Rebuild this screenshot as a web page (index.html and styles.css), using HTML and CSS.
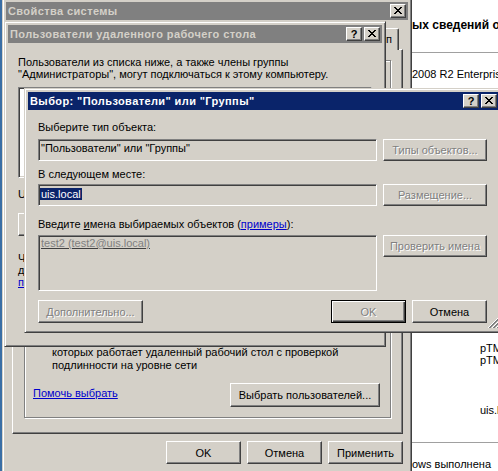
FILE: index.html
```html
<!DOCTYPE html>
<html lang="ru">
<head>
<meta charset="utf-8">
<title>Выбор пользователей</title>
<link rel="stylesheet" href="styles.css">
</head>
<body>
<div class="desktop">

  <div class="infowin">
    <div class="info-head">ых сведений о вашем компьютере</div>
    <div class="info-rule"></div>
    <div class="info-line">2008 R2 Enterprise</div>
    <div class="info-values">
      <div>pTM</div>
      <div>pTM</div>
      <div class="info-uis">uis.local</div>
    </div>
    <div class="info-rule info-rule2"></div>
    <div class="info-line info-act">ows выполнена</div>
  </div>

  <div class="win win1">
    <div class="titlebar inactive">
      <span class="title-text">Свойства системы</span>
      <span class="cap-btns">
        <span class="cap-btn"><svg class="gx" width="8" height="7" viewBox="0 0 8 7"><path d="M0 0h2v1H0zM6 0h2v1H6zM1 1h2v1H1zM5 1h2v1H5zM2 2h4v1H2zM3 3h2v1H3zM2 4h4v1H2zM1 5h2v1H1zM5 5h2v1H5zM0 6h2v1H0zM6 6h2v1H6z" fill="#000"/></svg></span>
      </span>
    </div>
    <div class="client w1-client">
      <div class="tabstrip">
        <span class="tab">Дополнительно</span>
        <span class="tab tab-sel">Удаленный доступ</span>
      </div>
      <div class="tabpanel">
        <div class="groupbox">
          <div class="radio-text">
            <div>Разрешать подключения только с компьютеров, на</div>
            <div>которых работает удаленный рабочий стол с проверкой</div>
            <div>подлинности на уровне сети</div>
          </div>
          <div class="gb-actions">
            <a class="link help-link">Помочь выбрать</a>
            <span class="btn btn-wide">Выбрать пользователей...</span>
          </div>
        </div>
      </div>
      <div class="btnrow">
        <span class="btn">OK</span>
        <span class="btn">Отмена</span>
        <span class="btn">Применить</span>
      </div>
    </div>
  </div>

  <div class="win win2">
    <div class="titlebar inactive">
      <span class="title-text">Пользователи удаленного рабочего стола</span>
      <span class="cap-btns">
        <span class="cap-btn cap-help">?</span>
        <span class="cap-btn"><svg class="gx" width="8" height="7" viewBox="0 0 8 7"><path d="M0 0h2v1H0zM6 0h2v1H6zM1 1h2v1H1zM5 1h2v1H5zM2 2h4v1H2zM3 3h2v1H3zM2 4h4v1H2zM1 5h2v1H1zM5 5h2v1H5zM0 6h2v1H0zM6 6h2v1H6z" fill="#000"/></svg></span>
      </span>
    </div>
    <div class="client w2-client">
      <div class="w2-para">
        <div>Пользователи из списка ниже, а также члены группы</div>
        <div>"Администраторы", могут подключаться к этому компьютеру.</div>
      </div>
      <div class="listbox"></div>
      <div class="w2-label">UIS\Администратор уже имеет доступ.</div>
      <div class="w2-btnrow">
        <span class="btn">Добавить...</span>
        <span class="btn">Удалить</span>
      </div>
      <div class="w2-para2">
        <div>Чтобы создать новые учетные записи пользователей или</div>
        <div>добавить пользователей в другие группы, откройте</div>
        <div><a class="link">панель управления</a> и выберите "Учетные записи".</div>
      </div>
      <div class="w2-bottom">
        <span class="btn">OK</span>
        <span class="btn">Отмена</span>
      </div>
    </div>
  </div>

  <div class="win dlg">
    <div class="titlebar active">
      <span class="title-text">Выбор: "Пользователи" или "Группы"</span>
      <span class="cap-btns">
        <span class="cap-btn cap-help">?</span>
        <span class="cap-btn"><svg class="gx" width="8" height="7" viewBox="0 0 8 7"><path d="M0 0h2v1H0zM6 0h2v1H6zM1 1h2v1H1zM5 1h2v1H5zM2 2h4v1H2zM3 3h2v1H3zM2 4h4v1H2zM1 5h2v1H1zM5 5h2v1H5zM0 6h2v1H0zM6 6h2v1H6z" fill="#000"/></svg></span>
      </span>
    </div>
    <div class="client dlg-client">
      <div class="dlg-label">Выберите тип объекта:</div>
      <div class="dlg-row row1">
        <div class="field">"Пользователи" или "Группы"</div>
        <span class="btn dbtn disabled">Типы объектов...</span>
      </div>
      <div class="dlg-label label2">В следующем месте:</div>
      <div class="dlg-row row2">
        <div class="field field-loc"><span class="sel">uis.local</span></div>
        <span class="btn dbtn disabled">Размещение...</span>
      </div>
      <div class="dlg-label label3">Введите <u>и</u>мена выбираемых объектов (<a class="link">примеры</a>):</div>
      <div class="dlg-row row3">
        <div class="field field-names"><span class="name-ent">test2 (test2@uis.local)</span></div>
        <span class="btn dbtn disabled">Проверить имена</span>
      </div>
      <div class="dlg-bottom">
        <span class="btn btn-adv disabled">Дополнительно...</span>
        <span class="spacer"></span>
        <span class="btn default disabled">OK</span>
        <span class="btn">Отмена</span>
      </div>
      <svg class="grip" width="12" height="12" viewBox="0 0 12 12">
        <g stroke-width="1" shape-rendering="crispEdges" fill="none">
          <path d="M11.5 0.5L0.5 11.5M11.5 4.5L4.5 11.5M11.5 8.5L8.5 11.5" stroke="#ffffff"/>
          <path d="M11.5 1.5L1.5 11.5M11.5 2.5L2.5 11.5M11.5 5.5L5.5 11.5M11.5 6.5L6.5 11.5M11.5 9.5L9.5 11.5M11.5 10.5L10.5 11.5" stroke="#808080"/>
        </g>
      </svg>
    </div>
  </div>

</div>
</body>
</html>
```

FILE: styles.css
```css
* { box-sizing: border-box; }
html, body { margin: 0; padding: 0; }
body {
  width: 498px;
  height: 471px;
  overflow: hidden;
  font-family: "Liberation Sans", Arial, sans-serif;
  font-size: 11px;
  color: #000;
}
.desktop {
  position: relative;
  width: 498px;
  height: 471px;
  overflow: hidden;
  background: #3a6ea5;
}

/* background window (system info) */
.infowin {
  position: absolute;
  z-index: 0;
  left: 412px;
  top: 0;
  width: 200px;
  height: 471px;
  background: #fff;
  display: flex;
  flex-direction: column;
  white-space: nowrap;
}
.info-head { font-weight: bold; font-size: 12px; line-height: 14px; margin-top: 18px; }
.info-rule { height: 1px; background: #a0a0a0; margin-top: 20px; flex: none; }
.info-line { line-height: 13px; margin-top: 15px; }
.info-values { margin-left: 68px; margin-top: 261px; line-height: 12px; }
.info-uis { margin-top: 38px; }
.info-rule2 { margin-top: 26px; }
.info-act { margin-top: 15px; }

/* windows */
.win {
  position: absolute;
  background: #d4d0c8;
  border: 1px solid;
  border-color: #d4d0c8 #404040 #404040 #d4d0c8;
  box-shadow: inset 1px 1px #fff, inset -1px -1px #808080;
  padding: 3px;
  display: flex;
  flex-direction: column;
}
.win1 { z-index: 1; left: 2px; top: -2px; width: 410px; height: 490px; }
.win2 { z-index: 2; left: 4px; top: 21px; width: 382px; height: 326px; }
.dlg { z-index: 3; left: 24px; top: 88px; width: 479px; height: 245px; }

.titlebar {
  flex: none;
  height: 18px;
  display: flex;
  align-items: center;
  justify-content: space-between;
  padding: 0 2px;
  font-weight: bold;
  white-space: nowrap;
  overflow: hidden;
}
.title-text { letter-spacing: 0.4px; }
.titlebar.inactive { background: #808080; color: #d4d0c8; }
.titlebar.active { background: #0a246a; color: #fff; }
.cap-btns { display: flex; gap: 2px; flex: none; }
.cap-btn {
  width: 16px;
  height: 14px;
  background: #d4d0c8;
  border: 1px solid;
  border-color: #fff #404040 #404040 #fff;
  box-shadow: inset -1px -1px #808080;
  display: flex;
  align-items: center;
  justify-content: center;
  color: #000;
  padding-bottom: 1px;
}
.cap-help { font-weight: bold; font-size: 11px; line-height: 12px; }
.gx { display: block; }

.client { margin-top: 1px; flex: 1; display: flex; flex-direction: column; min-height: 0; }

/* buttons */
.btn {
  width: 75px;
  height: 23px;
  flex: none;
  background: #d4d0c8;
  border: 1px solid;
  border-color: #fff #404040 #404040 #fff;
  box-shadow: inset -1px -1px #808080;
  display: flex;
  align-items: center;
  justify-content: center;
  white-space: nowrap;
  color: #000;
}
.btn.disabled { color: #808080; text-shadow: 1px 1px 0 #fff; }
.btn.default {
  border-color: #000;
  box-shadow: inset 1px 1px #fff, inset -1px -1px #404040, inset -2px -2px #808080;
}
.link { color: #0000cc; text-decoration: underline; cursor: pointer; }

/* window 1: system properties */
.w1-client { padding: 7px 5px 0 6px; }
.tabstrip {
  flex: none;
  height: 21px;
  display: flex;
  justify-content: flex-end;
  align-items: flex-end;
  padding-right: 4px;
  white-space: nowrap;
}
.tab {
  height: 19px;
  padding: 0 6px;
  line-height: 17px;
  border: 1px solid;
  border-bottom: none;
  border-color: #fff #404040 #404040 #fff;
  border-radius: 2px 2px 0 0;
  box-shadow: inset -1px 0 #808080;
  background: #d4d0c8;
}
.tab-sel {
  height: 22px;
  line-height: 20px;
  margin-bottom: -1px;
  position: relative;
  z-index: 1;
}
.tabpanel {
  flex: none;
  height: 385px;
  border: 1px solid;
  border-color: #fff #404040 #404040 #fff;
  box-shadow: inset -1px -1px #808080;
  display: flex;
  flex-direction: column;
  padding-bottom: 15px;
}
.groupbox {
  flex: 1;
  margin: 10px 11px 0 11px;
  border: 1px solid #808080;
  box-shadow: inset 1px 1px #fff, 1px 1px #fff;
  display: flex;
  flex-direction: column;
  justify-content: flex-end;
  padding: 0 10px 10px 8px;
}
.radio-text { margin-left: 19px; line-height: 13px; white-space: nowrap; }
.gb-actions {
  margin-top: 11px;
  display: flex;
  justify-content: space-between;
  align-items: center;
}
.help-link { margin-bottom: 4px; }
.btn-wide { width: 150px; height: 24px; }
.btnrow { display: flex; justify-content: flex-end; gap: 6px; margin-top: 7px; }

/* window 2: remote desktop users */
.w2-client { padding: 12px 10px; }
.w2-para { line-height: 12px; white-space: nowrap; }
.listbox {
  flex: none;
  margin-top: 7px;
  height: 91px;
  background: #fff;
  border: 1px solid;
  border-color: #808080 #fff #fff #808080;
  box-shadow: inset 1px 1px #404040, inset -1px -1px #d4d0c8;
}
.w2-label { margin-top: 10px; line-height: 13px; white-space: nowrap; }
.w2-btnrow { display: flex; gap: 6px; margin-top: 12px; }
.w2-para2 { margin-top: 16px; line-height: 12px; white-space: nowrap; }
.w2-bottom { display: flex; justify-content: flex-end; gap: 6px; margin-top: 16px; }

/* dialog 3: select users */
.dlg-client { padding: 10px 12px 0 10px; position: relative; }
.dlg-label { line-height: 13px; white-space: nowrap; }
.label2 { margin-top: 7px; }
.label3 { margin-top: 12px; }
.dlg-row { display: flex; gap: 6px; align-items: flex-start; }
.row1 { margin-top: 5px; }
.row2 { margin-top: 3px; }
.row3 { margin-top: 4px; }
.field {
  width: 339px;
  height: 22px;
  flex: none;
  background: #d4d0c8;
  border: 1px solid;
  border-color: #808080 #fff #fff #808080;
  box-shadow: inset 1px 1px #404040, inset -1px -1px #d4d0c8;
  padding: 2px 2px 0 2px;
  line-height: 13px;
  white-space: nowrap;
  overflow: hidden;
}
.field-loc { padding: 2px 0 0 1px; }
.sel {
  display: inline-block;
  vertical-align: top;
  background: #0a246a;
  color: #fff;
  line-height: 12px;
  padding: 0 1px;
  margin-top: 1px;
}
.field-names { height: 56px; padding: 1px 2px 0 2px; }
.name-ent { color: #808080; text-decoration: underline; text-decoration-color: #404040; }
.dbtn { width: 104px; height: 22px; }
.dlg-bottom { display: flex; gap: 6px; margin-top: 9px; }
.btn-adv { width: 105px; }
.spacer { flex: 1; }
.grip { position: absolute; right: 0; bottom: 0; display: block; }
```
